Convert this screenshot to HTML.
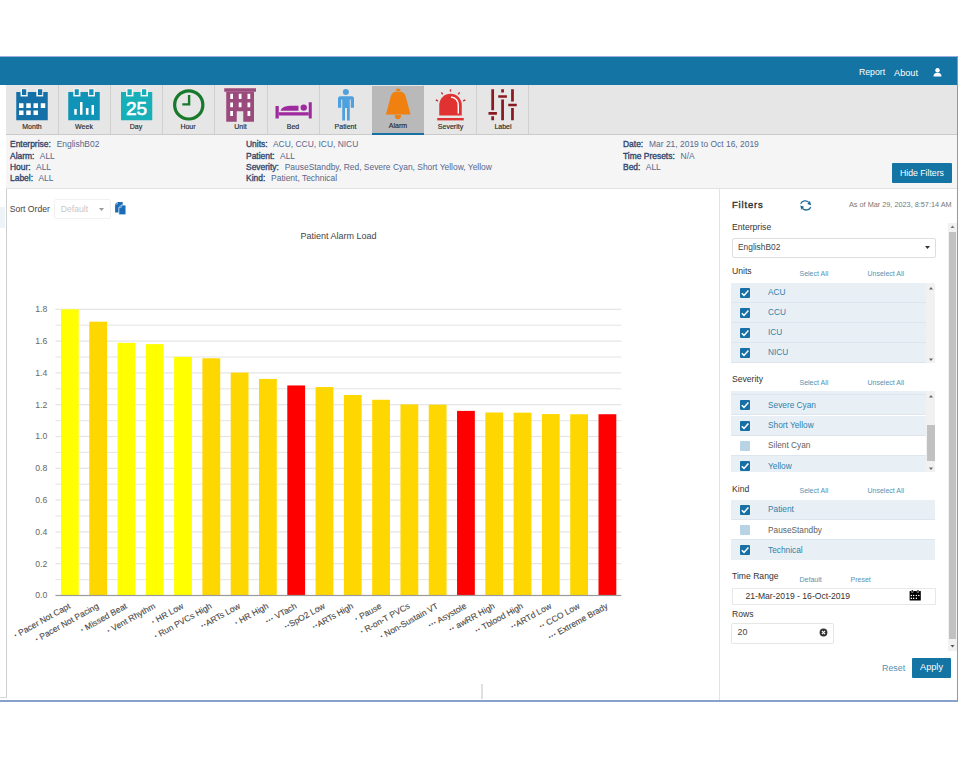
<!DOCTYPE html>
<html><head><meta charset="utf-8">
<style>
html,body{margin:0;padding:0;}
body{width:960px;height:760px;position:relative;overflow:hidden;background:#fff;font-family:"Liberation Sans",sans-serif;}
.a{position:absolute;}
.t{position:absolute;white-space:nowrap;line-height:1;}
#hdr{left:0;top:57px;width:957px;height:28.25px;background:#1474a4;}
#topline{left:0;top:56px;width:958px;height:1px;background:#9aaee0;}
#rline{left:957px;top:56px;width:1px;height:646px;background:#7d9cc8;}
#bline{left:0;top:700px;width:958px;height:2px;background:#86a2cc;}
#tb{left:6px;top:85.25px;width:951px;height:48.75px;background:#e6e6e6;border-bottom:1px solid #cacaca;}
.tab{position:absolute;top:85px;height:48px;border-right:1px solid #d2d2d2;}
.tl{position:absolute;top:123px;font-size:7px;color:#2a2a2a;-webkit-text-stroke:0.15px #2a2a2a;text-align:center;line-height:1;}
#sum{left:6px;top:135px;width:951px;height:53px;background:#f5f5f5;border-bottom:1px solid #e2e2e2;}
.sl{position:absolute;font-size:8.45px;line-height:1;white-space:nowrap;color:#57678b;}
.sl b{color:#33476d;font-weight:normal;-webkit-text-stroke:0.35px #33476d;margin-right:1.2px;}
#chart{left:6px;top:189px;width:713px;height:508px;border-left:1px solid #cfcfcf;background:#fff;}
#fp{left:719px;top:189px;width:238px;height:511px;border-left:1px solid #e3e3e3;background:#fff;}
.btn{position:absolute;background:#1474a4;color:#fff;border-radius:1px;font-size:8.6px;line-height:1;}
.lbl{position:absolute;font-size:8.6px;color:#333;line-height:1;white-space:nowrap;}
.lnk{position:absolute;font-size:7px;color:#5592b2;line-height:1;white-space:nowrap;}
.list{position:absolute;left:731px;width:204px;background:#fff;overflow:hidden;}
.row{position:absolute;left:0;width:195px;height:20px;box-sizing:border-box;background:#e8f0f6;border-bottom:1px solid #dde6ee;}
.row.w{background:#fff;}
.cb{position:absolute;left:9px;top:5px;width:10px;height:10px;background:#1670a6;border-radius:1px;}
.cb.off{background:#b9d3e6;}
.rt{position:absolute;left:37px;top:5.8px;font-size:8.3px;color:#2f80aa;line-height:1;white-space:nowrap;}
.row.w .rt{color:#5f5f5f;}
</style></head><body>
<div class="a" id="topline"></div>
<div class="a" id="hdr"></div>
<div class="t" style="left:859px;top:68px;font-size:8.7px;color:#fff;">Report</div>
<div class="t" style="left:894px;top:68.5px;font-size:9.2px;color:#fff;">About</div>
<svg class="a" style="left:933px;top:68px" width="9" height="9" viewBox="0 0 9 9"><circle cx="4.5" cy="2.2" r="2.2" fill="#fff"/><path d="M0.5 8.5 Q0.5 4.8 4.5 4.8 Q8.5 4.8 8.5 8.5Z" fill="#fff"/></svg>

<div class="a" id="tb"></div>
<!-- tabs -->
<div class="a" style="left:57.50px;top:85px;width:1px;height:49px;background:#d0d0d0"></div>
<div class="a" style="left:109.76px;top:85px;width:1px;height:49px;background:#d0d0d0"></div>
<div class="a" style="left:162.02px;top:85px;width:1px;height:49px;background:#d0d0d0"></div>
<div class="a" style="left:214.28px;top:85px;width:1px;height:49px;background:#d0d0d0"></div>
<div class="a" style="left:266.54px;top:85px;width:1px;height:49px;background:#d0d0d0"></div>
<div class="a" style="left:318.80px;top:85px;width:1px;height:49px;background:#d0d0d0"></div>
<div class="a" style="left:423.32px;top:85px;width:1px;height:49px;background:#d0d0d0"></div>
<div class="a" style="left:475.58px;top:85px;width:1px;height:49px;background:#d0d0d0"></div>
<div class="a" style="left:527.84px;top:85px;width:1px;height:49px;background:#d0d0d0"></div>
<div class="a" style="left:372.1px;top:85.5px;width:52px;height:47px;background:#b9b9b9"></div>
<div class="a" style="left:372.1px;top:132.5px;width:52px;height:2px;background:#1670a0"></div>


<svg class="a" style="left:0;top:0" width="960" height="140" viewBox="0 0 960 140">
<!-- Month -->
<rect x="20.8" y="88.6" width="6.699999999999999" height="7.9" fill="#f4f7f8"/><rect x="36.5" y="88.6" width="6.5" height="7.9" fill="#f4f7f8"/><rect x="73.5" y="88.6" width="6.700000000000003" height="7.9" fill="#f4f7f8"/><rect x="88.2" y="88.6" width="6.3999999999999915" height="7.9" fill="#f4f7f8"/><rect x="126.3" y="88.6" width="6.8999999999999915" height="7.9" fill="#f4f7f8"/><rect x="140.8" y="88.6" width="6.899999999999977" height="7.9" fill="#f4f7f8"/>
<g fill="#1670a8">
<path d="M16.25 92 H20.5 V96.5 H27.75 V92 H36.25 V96.5 H43.25 V92 H47.75 V120.25 H16.25 Z"/>
<rect x="22" y="89.25" width="4.25" height="5.75"/><rect x="38" y="89.25" width="4.25" height="5.75"/>
</g>
<g fill="#fff">
<rect x="19" y="103.25" width="4.5" height="4.75"/><rect x="26.25" y="103.25" width="4.5" height="4.75"/><rect x="33.5" y="103.25" width="4.5" height="4.75"/><rect x="40.75" y="103.25" width="4.5" height="4.75"/>
<rect x="19" y="110.5" width="4.5" height="4.5"/><rect x="26.25" y="110.5" width="4.5" height="4.5"/><rect x="33.5" y="110.5" width="4.5" height="4.5"/>
</g>
<!-- Week -->
<g fill="#0f93b7">
<path d="M68.25 92 H73.25 V96.5 H80.5 V92 H88 V96.5 H95 V92 H99.75 V120.25 H68.25 Z"/>
<rect x="74.75" y="89.25" width="4" height="5.75"/><rect x="89.25" y="89.25" width="4.25" height="5.75"/>
</g>
<g fill="#fff">
<rect x="74.25" y="109" width="2.5" height="5.75"/><rect x="80" y="102" width="2.5" height="12.75"/><rect x="85.9" y="108" width="2.6" height="6.75"/><rect x="91.5" y="105" width="2.5" height="9.75"/>
</g>
<!-- Day -->
<g fill="#17b0b8">
<path d="M121 92 H126 V96.5 H133.5 V92 H140.5 V96.5 H148 V92 H152.25 V120.25 H121 Z"/>
<rect x="127.5" y="89.25" width="4.25" height="5.75"/><rect x="142" y="89.25" width="4.25" height="5.75"/>
</g>
<text x="136.6" y="114.6" font-family="Liberation Sans" font-size="19" fill="#fff" stroke="#fff" stroke-width="0.6" text-anchor="middle" letter-spacing="0">25</text>
<!-- Hour -->
<circle cx="188.75" cy="104.9" r="14.1" fill="none" stroke="#18792b" stroke-width="3.2"/>
<path d="M189.1 95 V104.4 H182.3" fill="none" stroke="#18792b" stroke-width="2.4"/>
<!-- Unit -->
<g fill="#9b4a7c">
<rect x="224.25" y="88.25" width="31.75" height="3.5"/>
<path d="M226.25 91.75 H254 V121.75 H243.25 V111.25 H236.75 V121.75 H226.25 Z"/>
</g>
<g fill="#fff">
<rect x="230.25" y="93.75" width="2.75" height="5.25"/><rect x="238.75" y="93.75" width="2.75" height="5.25"/><rect x="247.5" y="93.75" width="2.75" height="5.25"/>
<rect x="230.25" y="102.5" width="2.75" height="4.75"/><rect x="238.75" y="102.5" width="2.75" height="4.75"/><rect x="247.5" y="102.5" width="2.75" height="4.75"/>
<rect x="230.25" y="111" width="2.75" height="5"/><rect x="247.5" y="111" width="2.75" height="5"/>
</g>
<!-- Bed -->
<g fill="#9f2a9f">
<rect x="275.5" y="106" width="3.25" height="12.5"/>
<rect x="308.75" y="102.25" width="3" height="16.25"/>
<rect x="278.75" y="112.25" width="30" height="3.25"/>
<path d="M280.5 110.75 Q281.5 106.2 290 105.75 L298.5 105.75 V110.75 Z"/>
<circle cx="303.75" cy="107.6" r="3.2"/>
</g>
<!-- Patient -->
<g fill="#4ea1dc">
<circle cx="345.9" cy="92.1" r="3"/>
<path d="M340.5 96.25 H351.75 Q354 96.25 354 98.5 V107.75 H350.75 V99.5 H349.75 V120.5 H347 V108 H345 V120.5 H342.25 V99.5 H341.25 V107.75 H338 V98.5 Q338 96.25 340.5 96.25 Z"/>
</g>
<!-- Alarm -->
<g fill="#f0800f">
<rect x="396.2" y="88.8" width="4.1" height="2.2" rx="0.6"/>
<path d="M385.9 114.5 L390.6 97 Q391.6 91.6 398.2 91.6 Q404.8 91.6 405.8 97 L410.5 114.5 Z"/>
<path d="M394.8 115 H401 Q401 119.3 397.9 119.3 Q394.8 119.3 394.8 115 Z"/>
</g>
<!-- Severity -->
<g fill="#e13232">
<path d="M439.25 115.5 V105 A11.25 11.25 0 0 1 461.75 105 V115.5 Z"/>
<rect x="437.25" y="118" width="26.5" height="2.4"/>
</g>
<path d="M451 97 Q458.5 98 458.3 106 V113.5" fill="none" stroke="#fff" stroke-width="1.4"/>
<g stroke="#b8323c" stroke-width="1.4" stroke-linecap="butt">
<line x1="450.5" y1="89.4" x2="450.5" y2="91.6"/>
<line x1="441.4" y1="92.4" x2="442.7" y2="94.3"/>
<line x1="459.6" y1="92.4" x2="458.3" y2="94.3"/>
<line x1="435.8" y1="99.9" x2="438" y2="101"/>
<line x1="465.4" y1="99.9" x2="463.2" y2="101"/>
</g>
<!-- Label -->
<g fill="#8a1a22">
<rect x="491.3" y="89.25" width="2.75" height="21"/><rect x="491.3" y="116.25" width="2.75" height="4"/>
<rect x="488.5" y="112" width="8.4" height="2.75"/>
<rect x="501.2" y="89.25" width="2.75" height="3.25"/><rect x="501.2" y="99.5" width="2.75" height="20.75"/>
<rect x="498.25" y="95.25" width="8.65" height="2.5"/>
<rect x="511.1" y="89.25" width="2.75" height="12.25"/><rect x="511.1" y="108" width="2.75" height="12.25"/>
<rect x="508.25" y="103.75" width="8.5" height="2.5"/>
</g>
</svg>
<div class="tl" style="left:6px;width:52px">Month</div>
<div class="tl" style="left:58px;width:52px">Week</div>
<div class="tl" style="left:110px;width:52px">Day</div>
<div class="tl" style="left:162px;width:52px">Hour</div>
<div class="tl" style="left:214px;width:53px">Unit</div>
<div class="tl" style="left:267px;width:52px">Bed</div>
<div class="tl" style="left:319px;width:53px">Patient</div>
<div class="tl" style="left:372px;width:52px;top:121.5px">Alarm</div>
<div class="tl" style="left:424px;width:53px">Severity</div>
<div class="tl" style="left:477px;width:52px">Label</div>

<div class="a" id="sum"></div>
<div class="sl" style="left:10px;top:140.4px"><b>Enterprise:</b>&nbsp; EnglishB02</div>
<div class="sl" style="left:10px;top:152px"><b>Alarm:</b>&nbsp; ALL</div>
<div class="sl" style="left:10px;top:162.6px"><b>Hour:</b>&nbsp; ALL</div>
<div class="sl" style="left:10px;top:173.9px"><b>Label:</b>&nbsp; ALL</div>
<div class="sl" style="left:246px;top:140.4px"><b>Units:</b>&nbsp; ACU, CCU, ICU, NICU</div>
<div class="sl" style="left:246px;top:152px"><b>Patient:</b>&nbsp; ALL</div>
<div class="sl" style="left:246px;top:162.6px"><b>Severity:</b>&nbsp; PauseStandby, Red, Severe Cyan, Short Yellow, Yellow</div>
<div class="sl" style="left:246px;top:173.9px"><b>Kind:</b>&nbsp; Patient, Technical</div>
<div class="sl" style="left:623px;top:140.4px"><b>Date:</b>&nbsp; Mar 21, 2019 to Oct 16, 2019</div>
<div class="sl" style="left:623px;top:152px"><b>Time Presets:</b>&nbsp; N/A</div>
<div class="sl" style="left:623px;top:162.6px"><b>Bed:</b>&nbsp; ALL</div>
<div class="btn" style="left:892px;top:163px;width:60px;height:20px;"><span class="t" style="left:8px;top:6px;font-size:8.7px">Hide Filters</span></div>
<div class="a" id="chart"></div>
<div class="t" style="left:9.7px;top:204.6px;font-size:8.6px;color:#444;">Sort Order</div>
<div class="a" style="left:53.7px;top:199.3px;width:55.3px;height:18px;border:1px solid #f1f1f1;border-radius:2px;background:#fff"></div>
<div class="t" style="left:60.8px;top:204.6px;font-size:8.6px;color:#c8c8c8;">Default</div>
<svg class="a" style="left:99px;top:208px" width="5" height="3"><path d="M0 0 H5 L2.5 3Z" fill="#999"/></svg>
<svg class="a" style="left:108px;top:198px" width="24" height="20" viewBox="108 198 24 20"><path d="M115.1 204.2 L117.4 201.9 H122.7 V212.5 H115.1Z" fill="#1b6cb6"/><path d="M118.8 207.6 L121.3 205.1 H125.9 V214.8 H118.8Z" fill="#1b6cb6" stroke="#fff" stroke-width="0.7"/><path d="M118.8 207.6 H121.3 V205.1" fill="none" stroke="#9cc3e8" stroke-width="0.8"/><path d="M115.1 204.2 H117.4 V201.9" fill="none" stroke="#9cc3e8" stroke-width="0.8"/></svg>
<div class="a" style="left:481px;top:684px;width:1.5px;height:15px;background:#e0e0e0"></div>
<div class="a" style="left:0;top:207px;width:5px;height:21px;background:#eef3f8"></div>
<div class="a" style="left:0;top:696.5px;width:7px;height:1px;background:#d8d8d8"></div>
<!--CHART-->
<svg class="a" style="left:0;top:188px" width="720" height="512" viewBox="0 188 720 512">
<rect x="55.4" y="579.00" width="565.85" height="1.2" fill="#e8e8e8"/>
<rect x="55.4" y="563.10" width="565.85" height="1.2" fill="#e4e4e4"/>
<text x="47.3" y="566.50" text-anchor="end" font-size="8.7" fill="#666">0.2</text>
<rect x="55.4" y="547.20" width="565.85" height="1.2" fill="#e8e8e8"/>
<rect x="55.4" y="531.30" width="565.85" height="1.2" fill="#e4e4e4"/>
<text x="47.3" y="534.70" text-anchor="end" font-size="8.7" fill="#666">0.4</text>
<rect x="55.4" y="515.40" width="565.85" height="1.2" fill="#e8e8e8"/>
<rect x="55.4" y="499.50" width="565.85" height="1.2" fill="#e4e4e4"/>
<text x="47.3" y="502.90" text-anchor="end" font-size="8.7" fill="#666">0.6</text>
<rect x="55.4" y="483.60" width="565.85" height="1.2" fill="#e8e8e8"/>
<rect x="55.4" y="467.70" width="565.85" height="1.2" fill="#e4e4e4"/>
<text x="47.3" y="471.10" text-anchor="end" font-size="8.7" fill="#666">0.8</text>
<rect x="55.4" y="451.80" width="565.85" height="1.2" fill="#e8e8e8"/>
<rect x="55.4" y="435.90" width="565.85" height="1.2" fill="#e4e4e4"/>
<text x="47.3" y="439.30" text-anchor="end" font-size="8.7" fill="#666">1.0</text>
<rect x="55.4" y="420.00" width="565.85" height="1.2" fill="#e8e8e8"/>
<rect x="55.4" y="404.10" width="565.85" height="1.2" fill="#e4e4e4"/>
<text x="47.3" y="407.50" text-anchor="end" font-size="8.7" fill="#666">1.2</text>
<rect x="55.4" y="388.20" width="565.85" height="1.2" fill="#e8e8e8"/>
<rect x="55.4" y="372.30" width="565.85" height="1.2" fill="#e4e4e4"/>
<text x="47.3" y="375.70" text-anchor="end" font-size="8.7" fill="#666">1.4</text>
<rect x="55.4" y="356.40" width="565.85" height="1.2" fill="#e8e8e8"/>
<rect x="55.4" y="340.50" width="565.85" height="1.2" fill="#e4e4e4"/>
<text x="47.3" y="343.90" text-anchor="end" font-size="8.7" fill="#666">1.6</text>
<rect x="55.4" y="324.60" width="565.85" height="1.2" fill="#e8e8e8"/>
<rect x="55.4" y="308.70" width="565.85" height="1.2" fill="#e4e4e4"/>
<text x="47.3" y="312.10" text-anchor="end" font-size="8.7" fill="#666">1.8</text>
<text x="47.3" y="598.30" text-anchor="end" font-size="8.7" fill="#666">0.0</text>
<rect x="60.95" y="309.30" width="17.8" height="286.20" fill="#ffff00"/>
<text x="71.05" y="607.80" text-anchor="end" font-size="8.5" fill="#4a4a4a" stroke="#4a4a4a" stroke-width="0.12" transform="rotate(-29 71.05 607.80)"><tspan font-weight="bold">·</tspan> Pacer Not Capt</text>
<rect x="89.24" y="321.70" width="17.8" height="273.80" fill="#ffd700"/>
<text x="99.34" y="607.80" text-anchor="end" font-size="8.5" fill="#4a4a4a" stroke="#4a4a4a" stroke-width="0.12" transform="rotate(-29 99.34 607.80)"><tspan font-weight="bold">·</tspan> Pacer Not Pacing</text>
<rect x="117.53" y="342.85" width="17.8" height="252.65" fill="#ffff00"/>
<text x="127.63" y="607.80" text-anchor="end" font-size="8.5" fill="#4a4a4a" stroke="#4a4a4a" stroke-width="0.12" transform="rotate(-29 127.63 607.80)"><tspan font-weight="bold">·</tspan> Missed Beat</text>
<rect x="145.82" y="344.12" width="17.8" height="251.38" fill="#ffff00"/>
<text x="155.92" y="607.80" text-anchor="end" font-size="8.5" fill="#4a4a4a" stroke="#4a4a4a" stroke-width="0.12" transform="rotate(-29 155.92 607.80)"><tspan font-weight="bold">·</tspan> Vent Rhythm</text>
<rect x="174.12" y="356.84" width="17.8" height="238.66" fill="#ffff00"/>
<text x="184.22" y="607.80" text-anchor="end" font-size="8.5" fill="#4a4a4a" stroke="#4a4a4a" stroke-width="0.12" transform="rotate(-29 184.22 607.80)"><tspan font-weight="bold">·</tspan> HR Low</text>
<rect x="202.41" y="358.27" width="17.8" height="237.23" fill="#ffd700"/>
<text x="212.51" y="607.80" text-anchor="end" font-size="8.5" fill="#4a4a4a" stroke="#4a4a4a" stroke-width="0.12" transform="rotate(-29 212.51 607.80)"><tspan font-weight="bold">·</tspan> Run PVCs High</text>
<rect x="230.70" y="372.58" width="17.8" height="222.92" fill="#ffd700"/>
<text x="240.80" y="607.80" text-anchor="end" font-size="8.5" fill="#4a4a4a" stroke="#4a4a4a" stroke-width="0.12" transform="rotate(-29 240.80 607.80)"><tspan font-weight="bold">··</tspan>ARTs Low</text>
<rect x="258.99" y="378.94" width="17.8" height="216.56" fill="#ffd700"/>
<text x="269.09" y="607.80" text-anchor="end" font-size="8.5" fill="#4a4a4a" stroke="#4a4a4a" stroke-width="0.12" transform="rotate(-29 269.09 607.80)"><tspan font-weight="bold">·</tspan> HR High</text>
<rect x="287.29" y="385.46" width="17.8" height="210.04" fill="#ff0000"/>
<text x="297.39" y="607.80" text-anchor="end" font-size="8.5" fill="#4a4a4a" stroke="#4a4a4a" stroke-width="0.12" transform="rotate(-29 297.39 607.80)"><tspan font-weight="bold">···</tspan> VTach</text>
<rect x="315.58" y="387.05" width="17.8" height="208.45" fill="#ffd700"/>
<text x="325.68" y="607.80" text-anchor="end" font-size="8.5" fill="#4a4a4a" stroke="#4a4a4a" stroke-width="0.12" transform="rotate(-29 325.68 607.80)"><tspan font-weight="bold">··</tspan>SpO2 Low</text>
<rect x="343.87" y="395.00" width="17.8" height="200.50" fill="#ffd700"/>
<text x="353.97" y="607.80" text-anchor="end" font-size="8.5" fill="#4a4a4a" stroke="#4a4a4a" stroke-width="0.12" transform="rotate(-29 353.97 607.80)"><tspan font-weight="bold">··</tspan>ARTs High</text>
<rect x="372.16" y="399.77" width="17.8" height="195.73" fill="#ffd700"/>
<text x="382.26" y="607.80" text-anchor="end" font-size="8.5" fill="#4a4a4a" stroke="#4a4a4a" stroke-width="0.12" transform="rotate(-29 382.26 607.80)"><tspan font-weight="bold">·</tspan> Pause</text>
<rect x="400.46" y="404.38" width="17.8" height="191.12" fill="#ffd700"/>
<text x="410.56" y="607.80" text-anchor="end" font-size="8.5" fill="#4a4a4a" stroke="#4a4a4a" stroke-width="0.12" transform="rotate(-29 410.56 607.80)"><tspan font-weight="bold">·</tspan> R-on-T PVCs</text>
<rect x="428.75" y="404.70" width="17.8" height="190.80" fill="#ffd700"/>
<text x="438.85" y="607.80" text-anchor="end" font-size="8.5" fill="#4a4a4a" stroke="#4a4a4a" stroke-width="0.12" transform="rotate(-29 438.85 607.80)"><tspan font-weight="bold">·</tspan> Non-Sustain VT</text>
<rect x="457.04" y="410.90" width="17.8" height="184.60" fill="#ff0000"/>
<text x="467.14" y="607.80" text-anchor="end" font-size="8.5" fill="#4a4a4a" stroke="#4a4a4a" stroke-width="0.12" transform="rotate(-29 467.14 607.80)"><tspan font-weight="bold">···</tspan> Asystole</text>
<rect x="485.33" y="412.49" width="17.8" height="183.01" fill="#ffd700"/>
<text x="495.43" y="607.80" text-anchor="end" font-size="8.5" fill="#4a4a4a" stroke="#4a4a4a" stroke-width="0.12" transform="rotate(-29 495.43 607.80)"><tspan font-weight="bold">··</tspan> awRR High</text>
<rect x="513.63" y="412.65" width="17.8" height="182.85" fill="#ffd700"/>
<text x="523.73" y="607.80" text-anchor="end" font-size="8.5" fill="#4a4a4a" stroke="#4a4a4a" stroke-width="0.12" transform="rotate(-29 523.73 607.80)"><tspan font-weight="bold">··</tspan> Tblood High</text>
<rect x="541.92" y="414.08" width="17.8" height="181.42" fill="#ffd700"/>
<text x="552.02" y="607.80" text-anchor="end" font-size="8.5" fill="#4a4a4a" stroke="#4a4a4a" stroke-width="0.12" transform="rotate(-29 552.02 607.80)"><tspan font-weight="bold">··</tspan>ARTd Low</text>
<rect x="570.21" y="414.24" width="17.8" height="181.26" fill="#ffd700"/>
<text x="580.31" y="607.80" text-anchor="end" font-size="8.5" fill="#4a4a4a" stroke="#4a4a4a" stroke-width="0.12" transform="rotate(-29 580.31 607.80)"><tspan font-weight="bold">··</tspan> CCO Low</text>
<rect x="598.50" y="414.24" width="17.8" height="181.26" fill="#ff0000"/>
<text x="608.60" y="607.80" text-anchor="end" font-size="8.5" fill="#4a4a4a" stroke="#4a4a4a" stroke-width="0.12" transform="rotate(-29 608.60 607.80)"><tspan font-weight="bold">···</tspan> Extreme Brady</text>
<rect x="55.4" y="594.9" width="565.85" height="1.2" fill="#9a9a9a"/>
<text x="338.5" y="238.75" text-anchor="middle" font-size="9" fill="#444">Patient Alarm Load</text>
</svg>
<!--/CHART-->
<div class="a" id="fp"></div>
<!--PANEL-->
<div class="t" style="left:732px;top:200.3px;font-size:9.4px;color:#333;-webkit-text-stroke:0.4px #333;letter-spacing:0.85px;">Filters</div>
<svg class="a" style="left:795px;top:196px" width="22" height="18" viewBox="795 196 22 18">
<path d="M800.6 203.8 A5.2 5.2 0 0 1 808.9 202.4" fill="none" stroke="#1a6b9a" stroke-width="1.25"/>
<path d="M809.9 201.1 L811.2 205.3 L807.3 204.1 Z" fill="#136596"/>
<path d="M810.8 207.1 A5.2 5.2 0 0 1 802.5 208.5" fill="none" stroke="#1a6b9a" stroke-width="1.25"/>
<path d="M801.5 209.8 L800.2 205.6 L804.1 206.8 Z" fill="#136596"/>
</svg>
<div class="t" style="left:849px;top:200.5px;font-size:7.3px;color:#777;">As of Mar 29, 2023, 8:57:14 AM</div>
<div class="lbl" style="left:732px;top:223px;">Enterprise</div>
<div class="a" style="left:731.5px;top:238px;width:202px;height:18px;border:1px solid #dedede;border-radius:2px;background:#fff"></div>
<div class="t" style="left:738px;top:243px;font-size:8.4px;color:#444;">EnglishB02</div>
<svg class="a" style="left:924.5px;top:246px" width="5" height="3"><path d="M0 0 H5 L2.5 3Z" fill="#333"/></svg>

<div class="lbl" style="left:732px;top:266.5px;">Units</div>
<div class="lnk" style="left:799.5px;top:269.5px;">Select All</div>
<div class="lnk" style="left:867.5px;top:269.5px;">Unselect All</div>
<div class="list" style="top:282.5px;height:80px;">
 <div class="row" style="top:0">  <div class="cb"><svg width="10" height="10" viewBox="0 0 10 10" style="position:absolute;left:0;top:0"><path d="M1.8 5.2 L4 7.4 L8.4 2.4" fill="none" stroke="#fff" stroke-width="1.5"/></svg></div><div class="rt">ACU</div></div>
 <div class="row" style="top:20px"><div class="cb"><svg width="10" height="10" viewBox="0 0 10 10" style="position:absolute;left:0;top:0"><path d="M1.8 5.2 L4 7.4 L8.4 2.4" fill="none" stroke="#fff" stroke-width="1.5"/></svg></div><div class="rt">CCU</div></div>
 <div class="row" style="top:40px"><div class="cb"><svg width="10" height="10" viewBox="0 0 10 10" style="position:absolute;left:0;top:0"><path d="M1.8 5.2 L4 7.4 L8.4 2.4" fill="none" stroke="#fff" stroke-width="1.5"/></svg></div><div class="rt">ICU</div></div>
 <div class="row" style="top:60px"><div class="cb"><svg width="10" height="10" viewBox="0 0 10 10" style="position:absolute;left:0;top:0"><path d="M1.8 5.2 L4 7.4 L8.4 2.4" fill="none" stroke="#fff" stroke-width="1.5"/></svg></div><div class="rt">NICU</div></div>
 <div class="a sbt" style="left:195px;top:0;width:9px;height:80.5px;background:#f1f1f1"></div><svg class="a" style="left:196px;top:2px" width="8" height="6"><path d="M2 4.5 L4 2 L6 4.5Z" fill="#666"/></svg><svg class="a" style="left:196px;top:74px" width="8" height="6"><path d="M2 1.5 L4 4 L6 1.5Z" fill="#666"/></svg>
</div>

<div class="lbl" style="left:732px;top:375px;">Severity</div>
<div class="lnk" style="left:799.5px;top:378.5px;">Select All</div>
<div class="lnk" style="left:867.5px;top:378.5px;">Unselect All</div>
<div class="list" style="top:390.5px;height:81.5px;">
 <div class="row" style="top:-16px"><div class="cb"><svg width="10" height="10" viewBox="0 0 10 10" style="position:absolute;left:0;top:0"><path d="M1.8 5.2 L4 7.4 L8.4 2.4" fill="none" stroke="#fff" stroke-width="1.5"/></svg></div><div class="rt">Red</div></div>
 <div class="row" style="top:4.5px"><div class="cb"><svg width="10" height="10" viewBox="0 0 10 10" style="position:absolute;left:0;top:0"><path d="M1.8 5.2 L4 7.4 L8.4 2.4" fill="none" stroke="#fff" stroke-width="1.5"/></svg></div><div class="rt">Severe Cyan</div></div>
 <div class="row" style="top:25px"><div class="cb"><svg width="10" height="10" viewBox="0 0 10 10" style="position:absolute;left:0;top:0"><path d="M1.8 5.2 L4 7.4 L8.4 2.4" fill="none" stroke="#fff" stroke-width="1.5"/></svg></div><div class="rt">Short Yellow</div></div>
 <div class="row w" style="top:45px"><div class="cb off"></div><div class="rt">Silent Cyan</div></div>
 <div class="row" style="top:65.5px"><div class="cb"><svg width="10" height="10" viewBox="0 0 10 10" style="position:absolute;left:0;top:0"><path d="M1.8 5.2 L4 7.4 L8.4 2.4" fill="none" stroke="#fff" stroke-width="1.5"/></svg></div><div class="rt">Yellow</div></div>
 <div class="a" style="left:195px;top:0;width:9px;height:81.5px;background:#f1f1f1"></div>
 <div class="a" style="left:196px;top:34.5px;width:7.5px;height:35.5px;background:#c1c1c1"></div><svg class="a" style="left:196px;top:2px" width="8" height="6"><path d="M2 4.5 L4 2 L6 4.5Z" fill="#666"/></svg><svg class="a" style="left:196px;top:75px" width="8" height="6"><path d="M2 1.5 L4 4 L6 1.5Z" fill="#666"/></svg>
</div>

<div class="lbl" style="left:732px;top:485px;">Kind</div>
<div class="lnk" style="left:799.5px;top:487px;">Select All</div>
<div class="lnk" style="left:867.5px;top:487px;">Unselect All</div>
<div class="list" style="top:499.5px;height:61px;">
 <div class="row" style="top:0;width:204px"><div class="cb"><svg width="10" height="10" viewBox="0 0 10 10" style="position:absolute;left:0;top:0"><path d="M1.8 5.2 L4 7.4 L8.4 2.4" fill="none" stroke="#fff" stroke-width="1.5"/></svg></div><div class="rt">Patient</div></div>
 <div class="row w" style="top:20.5px;width:204px"><div class="cb off"></div><div class="rt">PauseStandby</div></div>
 <div class="row" style="top:40.5px;width:204px;border-bottom:0"><div class="cb"><svg width="10" height="10" viewBox="0 0 10 10" style="position:absolute;left:0;top:0"><path d="M1.8 5.2 L4 7.4 L8.4 2.4" fill="none" stroke="#fff" stroke-width="1.5"/></svg></div><div class="rt">Technical</div></div>
</div>

<div class="lbl" style="left:732px;top:572px;">Time Range</div>
<div class="lnk" style="left:799.5px;top:575.5px;">Default</div>
<div class="lnk" style="left:850.5px;top:575.5px;">Preset</div>
<div class="a" style="left:731.5px;top:588px;width:202px;height:14.5px;border:1px solid #e8e8e8;background:#fff"></div>
<div class="t" style="left:745.5px;top:591.5px;font-size:8.6px;color:#333;">21-Mar-2019 - 16-Oct-2019</div>
<svg class="a" style="left:904px;top:586px" width="22" height="18" viewBox="904 586 22 18">
<rect x="909.6" y="590.9" width="11.2" height="9.7" rx="0.5" fill="#000"/>
<circle cx="912.3" cy="591.6" r="1.3" fill="#888"/><circle cx="917.9" cy="591.6" r="1.3" fill="#888"/>
<rect x="911.8" y="590.2" width="1" height="1.6" fill="#000"/><rect x="917.4" y="590.2" width="1" height="1.6" fill="#000"/>
<g fill="#fff"><rect x="910.7" y="594.9" width="1.3" height="1.2"/><rect x="912.95" y="594.9" width="1.3" height="1.2"/><rect x="915.75" y="594.9" width="1.3" height="1.2"/><rect x="918.15" y="594.9" width="1.3" height="1.2"/>
<rect x="910.7" y="597.7" width="1.3" height="1.3"/><rect x="912.95" y="597.7" width="1.3" height="1.3"/><rect x="915.75" y="597.7" width="1.3" height="1.3"/></g>
</svg>

<div class="lbl" style="left:732px;top:610px;">Rows</div>
<div class="a" style="left:731px;top:622.5px;width:101px;height:19.5px;border:1px solid #e6e6e6;border-radius:2px;background:#fff"></div>
<div class="t" style="left:737.5px;top:628.2px;font-size:8.9px;color:#444;">20</div>
<svg class="a" style="left:818.5px;top:627.8px" width="9" height="9" viewBox="0 0 9 9"><circle cx="4.5" cy="4.5" r="3.9" fill="#333"/><path d="M2.9 2.9 L6.1 6.1 M6.1 2.9 L2.9 6.1" stroke="#fff" stroke-width="1.1"/></svg>

<!-- outer scrollbar -->
<div class="a" style="left:948px;top:222.5px;width:8.5px;height:428.5px;background:#f1f1f1"></div>
<div class="a" style="left:948.5px;top:231.5px;width:7.5px;height:407px;background:#c1c1c1"></div>
<svg class="a" style="left:948px;top:223px" width="9" height="8"><path d="M2.5 5 L4.5 2.5 L6.5 5Z" fill="#777"/></svg>
<svg class="a" style="left:948px;top:642px" width="9" height="8"><path d="M2.5 3 L4.5 5.5 L6.5 3Z" fill="#555"/></svg>

<div class="t" style="left:882px;top:663.6px;font-size:8.9px;color:#5592b2;">Reset</div>
<div class="btn" style="left:912px;top:658px;width:39px;height:19.5px;"><span class="t" style="left:8px;top:5px;font-size:9.2px">Apply</span></div>

<!--/PANEL-->
<div class="a" id="rline"></div>
<div class="a" id="bline"></div>
</body></html>
